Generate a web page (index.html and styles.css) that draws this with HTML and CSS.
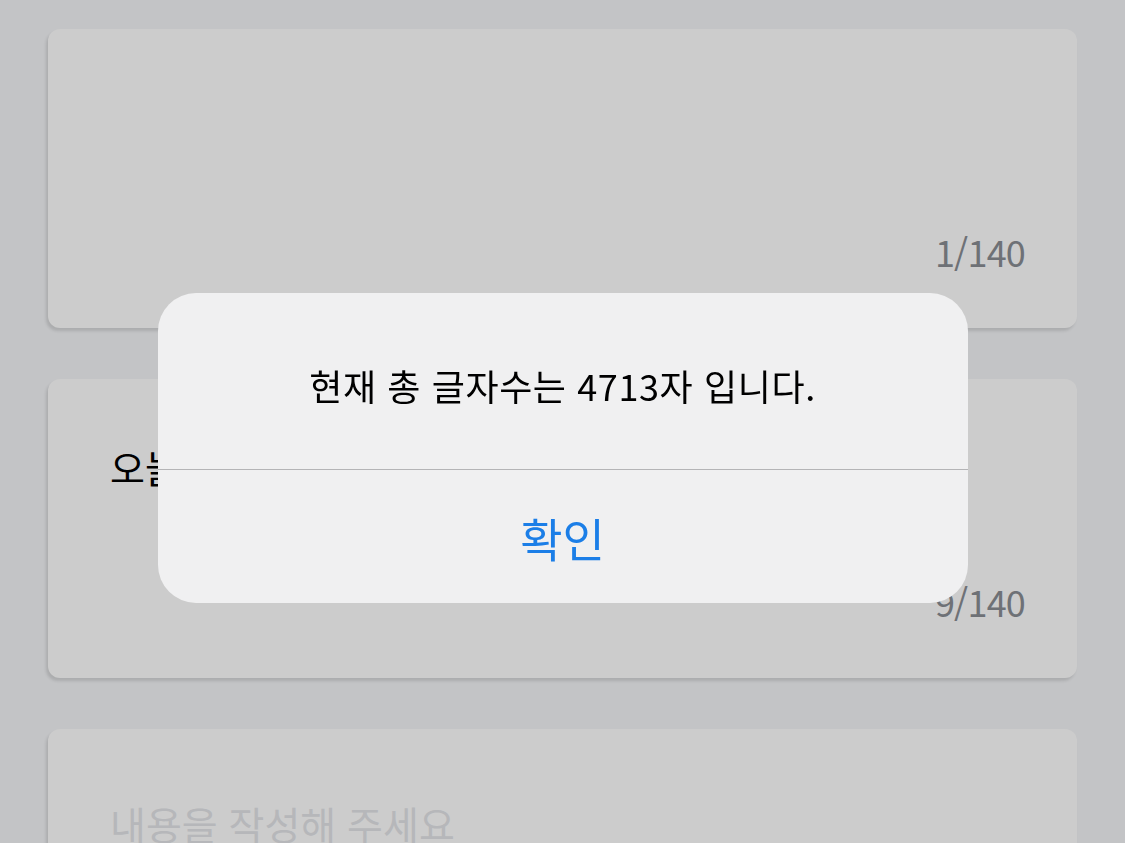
FILE: index.html
```html
<!DOCTYPE html>
<html lang="ko">
<head>
    <meta charset="UTF-8">
    <meta name="viewport" content="width=device-width, initial-scale=1.0">
    <title>글자수 세기</title>
    <link rel="stylesheet" href="styles.css">
</head>
<body>
    <div class="list">
        <div class="card">
            <div class="body"></div>
            <div class="count">1/140</div>
        </div>
        <div class="card">
            <div class="body">오늘의 일기</div>
            <div class="count">9/140</div>
        </div>
        <div class="card">
            <div class="body empty">내용을 작성해 주세요</div>
        </div>
    </div>

    <div class="overlay">
        <div class="alert">
            <div class="msg">현재 총 글자수는 4713자 입니다.</div>
            <div class="btn">확인</div>
        </div>
    </div>
</body>
</html>
```

FILE: styles.css
```css
body {
    margin: 0;
    background: #c3c4c6;
    font-family: "Noto Sans CJK KR", "Noto Sans", sans-serif;
    overflow: hidden;
}

div.list {
    display: flex;
    flex-direction: column;
    gap: 51px;
    padding: 29px 48px 0 48px;
}

div.card {
    height: 299px;
    background: #cccccc;
    border-radius: 12px;
    box-shadow: -2px 3px 3px rgba(0, 0, 0, 0.12);
    display: flex;
    flex-direction: column;
    justify-content: space-between;
    padding: 64px 52px 53px 62px;
    box-sizing: border-box;
}

div.card div.body {
    font-size: 38px;
    line-height: 48px;
    color: #000;
}
div.card div.body.empty {
    font-size: 39px;
    color: #b6b7ba;
    padding-top: 6px;
}

div.card div.count {
    text-align: right;
    font-size: 36px;
    line-height: 48px;
    color: #6e7176;
    letter-spacing: -0.8px;
}

div.overlay {
    position: fixed;
    inset: 0;
    display: flex;
    justify-content: center;
    align-items: flex-start;
    padding-top: 293px;
}

div.alert {
    width: 810px;
    background: #f0f0f1;
    border-radius: 38px;
    overflow: hidden;
}

div.alert div.msg {
    height: 177px;
    display: flex;
    align-items: center;
    justify-content: center;
    font-size: 36px;
    letter-spacing: 0.6px;
    color: #000;
    border-bottom: 1px solid #b4b4b6;
    box-sizing: border-box;
    padding-top: 8px;
}

div.alert div.btn {
    height: 133px;
    display: flex;
    align-items: center;
    justify-content: center;
    font-size: 46px;
    color: #1b7ee7;
}
```
